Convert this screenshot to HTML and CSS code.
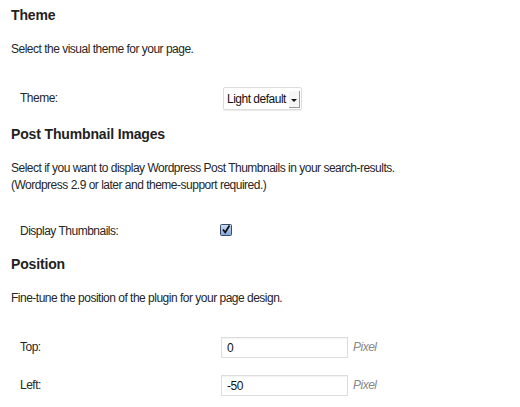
FILE: index.html
```html
<!DOCTYPE html>
<html lang="en">
<head>
  <meta charset="UTF-8" />
  <title>Search Plugin Settings</title>
  <link rel="stylesheet" href="styles.css">
</head>
<body>
  <div class="settings">
    <section class="section">
      <h3>Theme</h3>
      <p class="desc">Select the visual theme for your page.</p>
      <div class="field-row">
        <label for="theme">Theme:</label>
        <div class="select-wrap">
          <select id="theme">
            <option>Light default</option>
            <option>Dark</option>
          </select>
          <span class="select-arrow"></span>
        </div>
      </div>
    </section>

    <section class="section">
      <h3>Post Thumbnail Images</h3>
      <p class="desc">Select if you want to display Wordpress Post Thumbnails in your search-results.<br>(Wordpress 2.9 or later and theme-support required.)</p>
      <div class="field-row check-row">
        <label>Display Thumbnails:</label>
        <span class="checkbox">
          <svg width="12" height="12" viewBox="0 0 12 12">
            <defs>
              <linearGradient id="cbFill" x1="0" y1="0" x2="0" y2="1">
                <stop offset="0" stop-color="#cfe0f7"/>
                <stop offset="1" stop-color="#7fa6db"/>
              </linearGradient>
            </defs>
            <rect x="0.5" y="0.5" width="11" height="11" rx="1" fill="url(#cbFill)" stroke="#3b4a66"/>
            <path d="M3 5.5 L5.2 8.5 L9.5 1.5" fill="none" stroke="#111" stroke-width="1.8"/>
          </svg>
        </span>
      </div>
    </section>

    <section class="section">
      <h3>Position</h3>
      <p class="desc">Fine-tune the position of the plugin for your page design.</p>
      <div class="field-row">
        <label for="pos-top">Top:</label>
        <input id="pos-top" type="text" value="0">
        <span class="unit">Pixel</span>
      </div>
      <div class="field-row">
        <label for="pos-left">Left:</label>
        <input id="pos-left" type="text" value="-50">
        <span class="unit">Pixel</span>
      </div>
    </section>
  </div>
</body>
</html>
```

FILE: styles.css
```css
body {
  font-family: 'Liberation Sans', Arial, sans-serif;
  font-size: 12px;
  line-height: 17px;
  letter-spacing: -0.5px;
  color: #262626;
  background: #fff;
  margin: 0;
  padding: 0;
}
.settings {
  padding: 6px 11px 0;
}
.section + .section {
  margin-top: 15px;
}
.section h3 {
  font-size: 14px;
  line-height: 18px;
  letter-spacing: -0.15px;
  color: #222;
  margin: 0;
}
.desc {
  margin: 17px 0 0;
}
.field-row {
  display: flex;
  align-items: center;
  height: 23px;
  margin-top: 29px;
}
.field-row + .field-row {
  margin-top: 15px;
}
.check-row {
  height: 17px;
}
.field-row label {
  width: 202px;
  padding-left: 9px;
  flex-shrink: 0;
}
.select-wrap {
  position: relative;
  margin-left: 1px;
}
.select-wrap select {
  appearance: none;
  -webkit-appearance: none;
  font: 12px 'Liberation Sans', Arial, sans-serif;
  letter-spacing: -0.5px;
  color: #111;
  width: 79px;
  height: 23px;
  padding: 0 12px 0 3px;
  border: 1px solid #ddd;
  border-radius: 2px;
  background: #fff;
  box-shadow: 0 1px 1px rgba(0, 0, 0, 0.08);
  display: block;
}
.select-arrow {
  position: absolute;
  right: 2px;
  top: 4px;
  width: 10px;
  height: 16px;
  border-right: 1px solid #9a9a9a;
  border-bottom: 1px solid #9a9a9a;
  background: #f6f6f6;
  pointer-events: none;
}
.select-arrow::after {
  content: "";
  position: absolute;
  left: 2px;
  top: 8px;
  border-left: 3px solid transparent;
  border-right: 3px solid transparent;
  border-top: 3px solid #111;
}
.checkbox {
  display: flex;
  margin: -4px 0 0 -2px;
}
.field-row input {
  font: 12px 'Liberation Sans', Arial, sans-serif;
  letter-spacing: -0.5px;
  color: #111;
  width: 127px;
  height: 21px;
  box-sizing: border-box;
  padding: 0 5px;
  border: 1px solid #ddd;
  box-shadow: inset 0 1px 1px rgba(0, 0, 0, 0.05);
  margin: 0 0 0 -1px;
}
.unit {
  font-style: italic;
  color: #888;
  margin-left: 5px;
}
```
